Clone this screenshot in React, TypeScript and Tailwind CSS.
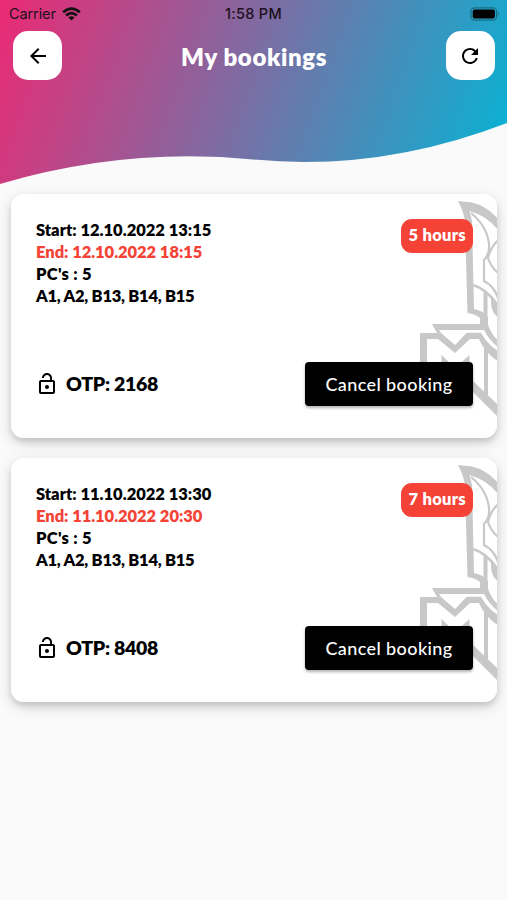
import { MdArrowBack, MdLockOpen, MdRefresh } from 'react-icons/md';

type Booking = {
  id: number;
  start: string;
  end: string;
  pcs: string[];
  hours: number;
  otp: string;
};

const bookings: Booking[] = [
  {
    id: 1,
    start: '12.10.2022 13:15',
    end: '12.10.2022 18:15',
    pcs: ['A1', 'A2', 'B13', 'B14', 'B15'],
    hours: 5,
    otp: '2168',
  },
  {
    id: 2,
    start: '11.10.2022 13:30',
    end: '11.10.2022 20:30',
    pcs: ['A1', 'A2', 'B13', 'B14', 'B15'],
    hours: 7,
    otp: '8408',
  },
];

function Wave() {
  return (
    <svg className="absolute inset-0" width="507" height="185" viewBox="0 0 507 185">
      <defs>
        <linearGradient id="wave" gradientUnits="userSpaceOnUse" x1="0" y1="0" x2="507" y2="184">
          <stop offset="0" stopColor="#eb2a74" />
          <stop offset="1" stopColor="#04b5d6" />
        </linearGradient>
      </defs>
      <path d="M0 0H507V123Q380 172 253 159.5Q126 147 0 184Z" fill="url(#wave)" />
    </svg>
  );
}

function StatusBar() {
  return (
    <div className="grid h-7 grid-cols-3 items-center pl-[9px] pr-[7px] font-['Inter',sans-serif] text-[14.5px] text-[#20101c]">
      <div className="flex items-center gap-[6px]">
        <span className="tracking-[-0.1px]">Carrier</span>
        <svg width="19" height="14" viewBox="0 0 19 14" fill="none" stroke="#111" strokeWidth="2.8">
          <path d="M1.2 5.2Q9.5 -2 17.8 5.2" />
          <path d="M4.1 8.5Q9.5 3.8 14.9 8.5" />
          <path d="M6.4 10.4Q9.5 8 12.6 10.4L9.5 13.6Z" fill="#111" stroke="none" />
        </svg>
      </div>
      <span className="-ml-0.5 text-center font-medium tracking-[0.3px]">1:58 PM</span>
      <svg className="justify-self-end" width="30" height="14" viewBox="0 0 30 14">
        <rect x="1" y="0.8" width="25.6" height="12.4" rx="3.6" fill="none" stroke="#176d82" strokeWidth="1.2" />
        <rect x="2.7" y="2.4" width="22.2" height="9.2" rx="2" fill="#000" />
        <path d="M27.9 4.8Q29.7 7 27.9 9.2Z" fill="#176d82" />
      </svg>
    </div>
  );
}

function Emblem() {
  return (
    <svg
      className="absolute right-0 top-0"
      width="80"
      height="244"
      viewBox="417 0 80 244"
      fill="none"
      stroke="#c8c8c8"
    >
      {/* blade */}
      <path
        d="M458 7L472 8.5Q487 12 498 25V36Q487 22 469.5 17L472 27L474 115Q482 116 488 123V132H480V124Q475 120 467.5 119L465 27Q463 16 458 7Z"
        fill="#c8c8c8"
        stroke="none"
      />
      <path d="M471 19Q487 32 489 50Q490 60 484 66V87Q494 92 498 104" strokeWidth="2.2" />
      <path d="M498 46Q490 54 488 64Q491 73 498 79" strokeWidth="2.2" />
      <path d="M473 91Q487 95 498 112" strokeWidth="2.6" />
      <path d="M485.5 98V132" strokeWidth="4" />
      <path d="M491 103V109Q492 120 498 123V110Z" fill="#c8c8c8" stroke="none" />
      <path d="M486 128Q489 140 498 148" strokeWidth="2.4" />
      {/* lettering block */}
      <path
        d="M432 130H488V134Q492 143 498 150V167Q489 162 482 151L479 145H470L455 159L438 145H427V200H420V139H437Z"
        fill="#c8c8c8"
        stroke="none"
      />
      <path d="M439 136H484Q489 146 498 153V157Q489 152 481 139H467L455 151L441 139Z" fill="#fff" stroke="none" />
      <path d="M440 139L455 153L467 139.5H481" strokeWidth="1.5" />
      <path d="M441.5 161L455 174L469.5 161V185H441.5Z" fill="#c8c8c8" stroke="none" />
      <path d="M486 154V210" strokeWidth="4" />
      <path d="M472 186L499 212V224L472 197Z" fill="#c8c8c8" stroke="none" />
    </svg>
  );
}

function BookingCard({ booking }: { booking: Booking }) {
  return (
    <div className="relative h-[244px] overflow-hidden rounded-[13px] bg-white">
      <Emblem />
      <div className="relative flex h-full flex-col justify-between pb-[32px] pl-[25px] pr-[24px] pt-[24.5px]">
        <div className="flex items-start justify-between">
          <div className="text-[16.5px] font-extrabold leading-[22px] text-black">
            <p>Start: {booking.start}</p>
            <p className="tracking-[-0.05px] text-[#f44336]">End: {booking.end}</p>
            <p className="tracking-[0.3px]">PC's : {booking.pcs.length}</p>
            <p className="tracking-[-0.25px]">{booking.pcs.join(', ')}</p>
          </div>
          <span className="flex h-[34px] items-center rounded-[11px] bg-[#f44336] px-[7px] text-[16.5px] font-extrabold tracking-[0.3px] text-white">
            {booking.hours} hours
          </span>
        </div>
        <div className="flex items-center justify-between">
          <div className="flex items-center gap-[6px]">
            <MdLockOpen className="-ml-px mr-px size-6" />
            <span className="text-[19.5px] font-extrabold tracking-[-0.3px]">OTP: {booking.otp}</span>
          </div>
          <button className="h-[44px] w-[168px] rounded-[4px] bg-black text-[18px] font-medium tracking-[0.4px] text-white shadow-[0_2px_3px_rgba(0,0,0,0.3)]">
            Cancel booking
          </button>
        </div>
      </div>
    </div>
  );
}

export default function App() {
  return (
    <div className="relative h-[900px] w-[507px] overflow-hidden bg-[#fafafa] font-['Lato',sans-serif] text-black">
      <Wave />
      <div className="relative">
        <StatusBar />
        <header className="flex items-center justify-between pl-[13px] pr-[12px] pt-[3px]">
          <button className="flex size-[49px] items-center justify-center rounded-[15px] bg-white">
            <MdArrowBack className="size-6" />
          </button>
          <h1 className="pt-0.5 text-[24px] font-extrabold tracking-[0.6px] text-white">My bookings</h1>
          <button className="flex size-[49px] items-center justify-center rounded-[15px] bg-white">
            <MdRefresh className="size-6" />
          </button>
        </header>
        <main className="flex flex-col gap-5 pl-[11px] pr-[10px] pt-[114px]">
          {bookings.map((booking) => (
            <div
              key={booking.id}
              className="rounded-[13px] shadow-[0_4px_6px_rgba(0,0,0,0.14),0_5px_16px_rgba(0,0,0,0.12)]"
            >
              <BookingCard booking={booking} />
            </div>
          ))}
        </main>
      </div>
    </div>
  );
}
